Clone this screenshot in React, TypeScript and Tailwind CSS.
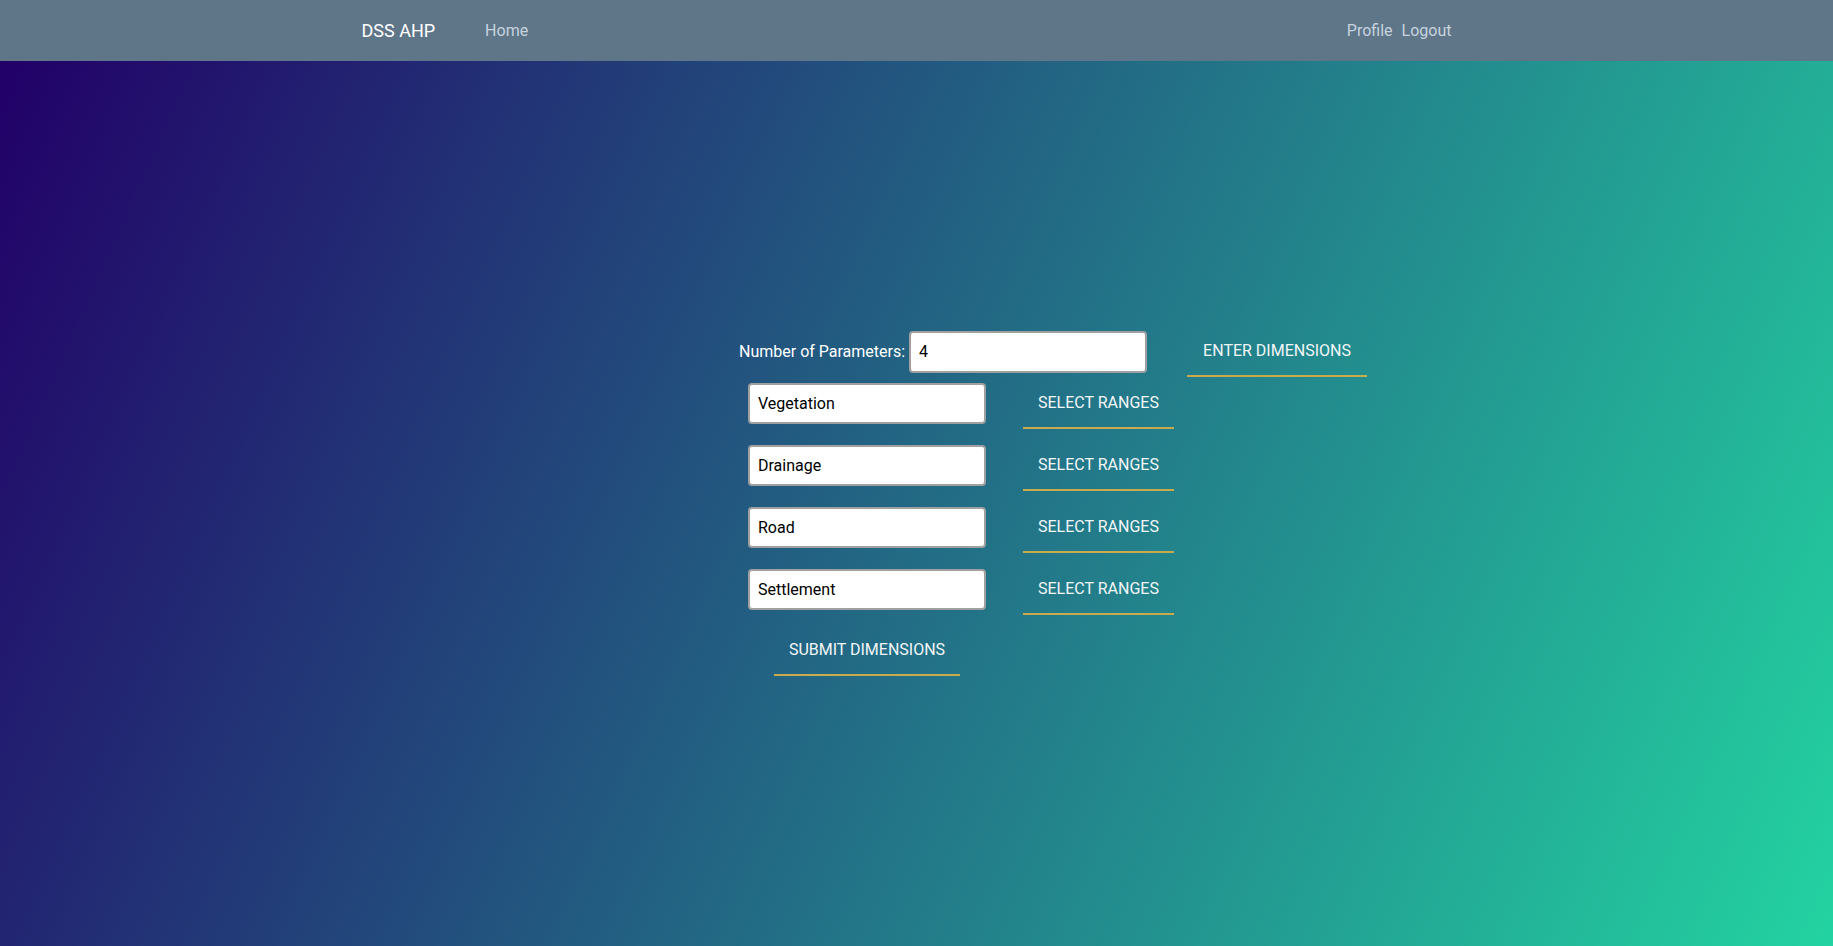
export default function App() {
  const params = ["Vegetation", "Drainage", "Road", "Settlement"];

  return (
    <div className="flex min-h-screen flex-col font-['Roboto',sans-serif]">
      <nav className="h-[61px] shrink-0 bg-[#5f7689]">
        <div className="mx-auto flex h-full w-[1140px] items-center justify-between px-[15px]">
          <div className="flex items-center">
            <span className="text-[18px] text-white">DSS AHP</span>
            <a className="ml-[50px] text-[16px] text-[#c6d3df]">Home</a>
          </div>
          <div className="flex items-center gap-[9px] pr-[20px] text-[16px] text-[#c6d3df]">
            <a>Profile</a>
            <a>Logout</a>
          </div>
        </div>
      </nav>

      <main className="flex flex-1 items-center justify-center bg-[linear-gradient(114deg,#220068_0%,#23d3a1_100%)] pb-[5px]">
        <div className="ml-[271px] flex w-[626px] flex-col whitespace-nowrap">
          <div className="flex h-[50px] items-center">
            <label className="mr-[4px] shrink-0 text-[16px] text-white">Number of Parameters:</label>
            <input
              defaultValue="4"
              className="h-[42px] w-[238px] shrink-0 rounded-[4px] border-2 border-[#a0a0a0] bg-white px-2 text-[16px] text-black outline-none"
            />
            <button className="ml-[40px] shrink-0 border-b-2 border-[#c9aa4c] px-4 py-3 text-[16px] uppercase leading-6 text-[#f2f6f8]">
              Enter Dimensions
            </button>
          </div>

          {params.map((p, i) => (
            <div key={p} className={`ml-[9px] flex h-[50px] items-center ${i === 0 ? "mt-[2px]" : "mt-[12px]"}`}>
              <input
                defaultValue={p}
                className="h-[41px] w-[238px] shrink-0 rounded-[4px] border-2 border-[#a0a0a0] bg-white px-2 text-[16px] text-black outline-none"
              />
              <button className="ml-[37px] shrink-0 border-b-2 border-[#c9aa4c] px-[15px] py-3 text-[16px] uppercase leading-6 text-[#f2f6f8]">
                Select Ranges
              </button>
            </div>
          ))}

          <div className="ml-[9px] mt-[11px] flex w-[238px] justify-center">
            <button className="shrink-0 border-b-2 border-[#c9aa4c] px-[15px] py-3 text-[16px] uppercase leading-6 text-[#f2f6f8]">
              Submit Dimensions
            </button>
          </div>
        </div>
      </main>
    </div>
  );
}
